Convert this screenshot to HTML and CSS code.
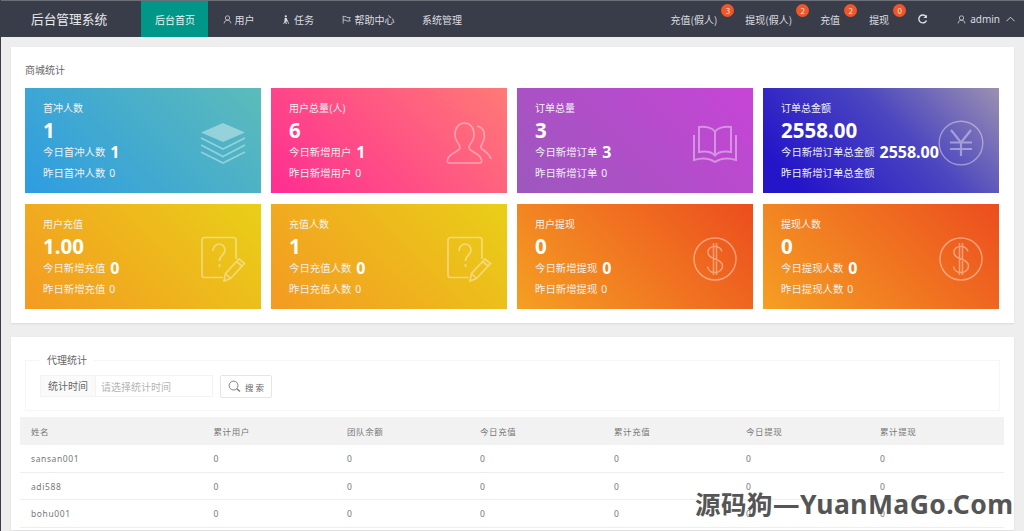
FILE: index.html
```html
<!DOCTYPE html>
<html lang="zh-CN">
<head>
<meta charset="utf-8">
<title>后台管理系统</title>
<link rel="stylesheet" href="styles.css">
</head>
<body>
<svg class="defs" width="0" height="0" aria-hidden="true">
  <symbol id="i-user" viewBox="0 0 12 12"><circle cx="6" cy="4" r="2.9" fill="none" stroke="currentColor"/><path d="M1.500 11.200c.3-2.700 2-4.300 4.500-4.300s4.200 1.600 4.500 4.300" fill="none" stroke="currentColor"/></symbol>
  <symbol id="i-q" viewBox="0 0 46 46"><path d="M36 23V4a2.500 2.500 0 0 0-2.500-2.500H4.500A2.500 2.500 0 0 0 2 4v35a2.500 2.500 0 0 0 2.500 2.500H23" fill="none" stroke="currentColor" stroke-width="1.700"/><path d="M13 15c0-4 3-7 6-7s6 2.500 6 6c0 5-5.500 5.500-5.500 11M19.500 28v3" fill="none" stroke="currentColor" stroke-width="1.700"/><path d="M24 45l1.500-7.500L39 23l5.500 4.500L30.500 42.500zM36.500 25.500l5.500 4.500M25.500 37.500l5 5" fill="none" stroke="currentColor" stroke-width="1.700"/></symbol>
  <symbol id="i-dollar" viewBox="0 0 46 46"><circle cx="23" cy="23" r="21" fill="none" stroke="currentColor" stroke-width="1.500"/><path d="M30 15.500c-1-3-3.500-5-7-5-4.500 0-7 2.500-7 6s2.500 5 7 6.500 7.500 3 7.500 7-3.500 6.500-7.500 6.500c-4 0-7-2.500-7.500-6M21.500 7v32M24.500 7v32" fill="none" stroke="currentColor" stroke-width="1.500"/></symbol>
</svg>

<header class="topbar">
  <div class="logo">后台管理系统</div>
  <nav class="nav-left">
    <a class="nav-item active">后台首页</a>
    <a class="nav-item"><svg class="nav-ico"><use href="#i-user"/></svg>用户</a>
    <a class="nav-item"><svg class="nav-ico" viewBox="0 0 12 12"><circle cx="5" cy="1.800" r="1.500" fill="currentColor"/><path d="M3.600 4h2.600l1.200 3 2.100 4.800-.7.300-2.300-4.400-.7 1.400.6 3H5L4.300 9l-1.700 3H1.700l1.600-4z" fill="currentColor"/></svg>任务</a>
    <a class="nav-item"><svg class="nav-ico nav-ico-wide" viewBox="0 0 12 12"><path d="M1.500 1v10.500M1.500 2.200h4.200l.8 1.200H11l-1.500 2.300L11 8H6l-.8-1.200H1.500" fill="none" stroke="currentColor"/></svg>帮助中心</a>
    <a class="nav-item">系统管理</a>
  </nav>
  <div class="nav-right">
    <a class="tip tip-long">充值(假人)<span class="badge">3</span></a>
    <a class="tip tip-long">提现(假人)<span class="badge">2</span></a>
    <a class="tip">充值<span class="badge">2</span></a>
    <a class="tip tip-long">提现<span class="badge">0</span></a>
    <svg class="refresh" viewBox="0 0 12 12"><path d="M10 3.200A4.300 4.300 0 1 0 10.300 7" fill="none" stroke="currentColor" stroke-width="1.500"/><path d="M10.800 0.800v3.600H7.200z" fill="currentColor"/></svg>
    <a class="admin"><svg class="nav-ico"><use href="#i-user"/></svg>admin<svg class="caret" viewBox="0 0 10 6"><path d="M.5 5.500L5 1l4.500 4.500" fill="none" stroke="currentColor"/></svg></a>
  </div>
</header>

<main class="main">
  <section class="panel panel-stats">
    <h2 class="panel-title">商城统计</h2>
    <div class="stats">
      <article class="stat g-blue">
        <h3>首冲人数</h3><p class="big">1</p>
        <p class="line">今日首冲人数<b>1</b></p><p class="line">昨日首冲人数<span>0</span></p>
        <svg class="stat-ico" viewBox="0 0 46 46"><path d="M23 3l22 9.500L23 22 1 12.500z" fill="currentColor"/><path d="M1 18l22 11 22-11M1 25l22 11.500L45 25M1 32l22 11 22-11" fill="none" stroke="currentColor" stroke-width="1.600"/></svg>
      </article>
      <article class="stat g-pink">
        <h3>用户总量(人)</h3><p class="big">6</p>
        <p class="line">今日新增用户<b>1</b></p><p class="line">昨日新增用户<span>0</span></p>
        <svg class="stat-ico" viewBox="0 0 46 46"><path d="M3 43c-2 0-2-2-1-4.500 2-5 9.500-6.500 11.500-9.500.7-1.500.5-3-.5-4.500-2-2.500-4-6-4-10C9 7.500 13 3 18.500 3S28 7.500 28 14.500c0 4-2 7.500-4 10-1 1.500-1.200 3-.5 4.500 2 3 9.500 4.500 11.500 9.500 1 2.500 1 4.500-1 4.500z" fill="none" stroke="currentColor" stroke-width="1.600"/><path d="M31 6c5 1 7.500 5 7.500 10 0 4-1.500 6.500-3 9-1 1.500-.5 3.500 1 4.500 4 2.500 7 5 8.500 9.500" fill="none" stroke="currentColor" stroke-width="1.600"/></svg>
      </article>
      <article class="stat g-purple">
        <h3>订单总量</h3><p class="big">3</p>
        <p class="line">今日新增订单<b>3</b></p><p class="line">昨日新增订单<span>0</span></p>
        <svg class="stat-ico" viewBox="0 0 46 46"><path d="M23 11.500C20 7.500 13 6 7 7v25c6.500-1 12.500-.5 16 3.500 3.500-4 9.500-4.500 16-3.500V7c-6-1-13 .5-16 4.500zM23 11.500v24" fill="none" stroke="currentColor" stroke-width="2"/><path d="M2 15v25c8-2.500 15-2 21 2 6-4 13-4.500 21-2V15" fill="none" stroke="currentColor" stroke-width="2"/></svg>
      </article>
      <article class="stat g-indigo">
        <h3>订单总金额</h3><p class="big">2558.00</p>
        <p class="line">今日新增订单总金额<b>2558.00</b></p><p class="line">昨日新增订单总金额</p>
        <svg class="stat-ico" viewBox="0 0 46 46"><circle cx="23" cy="23" r="21.800" fill="none" stroke="currentColor" stroke-width="1.400"/><path d="M13 10l10 12.500L33 10M23 22.500V36M12 22.500h22M12 29h22" fill="none" stroke="currentColor" stroke-width="2.200"/></svg>
      </article>
      <article class="stat g-yellow">
        <h3>用户充值</h3><p class="big">1.00</p>
        <p class="line">今日新增充值<b>0</b></p><p class="line">昨日新增充值<span>0</span></p>
        <svg class="stat-ico"><use href="#i-q"/></svg>
      </article>
      <article class="stat g-yellow">
        <h3>充值人数</h3><p class="big">1</p>
        <p class="line">今日充值人数<b>0</b></p><p class="line">昨日充值人数<span>0</span></p>
        <svg class="stat-ico"><use href="#i-q"/></svg>
      </article>
      <article class="stat g-orange">
        <h3>用户提现</h3><p class="big">0</p>
        <p class="line">今日新增提现<b>0</b></p><p class="line">昨日新增提现<span>0</span></p>
        <svg class="stat-ico"><use href="#i-dollar"/></svg>
      </article>
      <article class="stat g-orange">
        <h3>提现人数</h3><p class="big">0</p>
        <p class="line">今日提现人数<b>0</b></p><p class="line">昨日提现人数<span>0</span></p>
        <svg class="stat-ico"><use href="#i-dollar"/></svg>
      </article>
    </div>
  </section>

  <section class="panel panel-agents">
    <fieldset class="filter">
      <legend>代理统计</legend>
      <div class="filter-row">
        <div class="input-group">
          <label class="input-label" for="t">统计时间</label>
          <input class="input" id="t" placeholder="请选择统计时间">
        </div>
        <button class="search" type="button"><svg viewBox="0 0 14 14"><circle cx="6" cy="6" r="4.800" fill="none" stroke="currentColor"/><path d="M9.500 9.500l3.500 3" fill="none" stroke="currentColor" stroke-width="1.400"/></svg>搜 索</button>
      </div>
    </fieldset>
    <table class="table">
      <colgroup><col class="col-name"><col class="c1"><col class="c2"><col class="c3"><col class="c4"><col class="c5"><col class="c6"></colgroup>
      <thead><tr><th>姓名</th><th>累计用户</th><th>团队余额</th><th>今日充值</th><th>累计充值</th><th>今日提现</th><th>累计提现</th></tr></thead>
      <tbody>
        <tr><td>sansan001</td><td>0</td><td>0</td><td>0</td><td>0</td><td>0</td><td>0</td></tr>
        <tr><td>adi588</td><td>0</td><td>0</td><td>0</td><td>0</td><td>0</td><td>0</td></tr>
        <tr><td>bohu001</td><td>0</td><td>0</td><td>0</td><td>0</td><td>0</td><td>0</td></tr>
      </tbody>
    </table>
  </section>
</main>
<div class="watermark">源码狗<span class="wm-latin">—YuanMaGo.Com</span></div>
</body>
</html>
```
FILE: styles.css
```css
* { box-sizing: border-box; }
html, body { margin: 0; height: 531px; overflow: hidden; }
body {
  position: relative;
  background: #eeeeee;
  border-left: 1px solid #3a3d47;
  font-family: "Noto Sans CJK SC", "Noto Sans", sans-serif;
  color: #666;
}
.defs { position: absolute; }
p, h2, h3 { margin: 0; font-weight: 400; }

.topbar {
  display: flex;
  align-items: stretch;
  height: 37px;
  margin-left: -1px;
  background: #393d49;
  border-top: 1px solid #6c6e78;
  color: #e6e7ea;
  font-size: 10px;
}
.logo { width: 141px; padding-left: 31px; font-size: 12.700px; line-height: 36px; color: #e9eaec; }
.nav-left { display: flex; }
.nav-item { display: flex; align-items: center; padding: 0 13px 0 14.500px; white-space: nowrap; color: #dcdde0; }
.nav-item.active { width: 67px; padding: 0 14px; background: #009688; color: #e8f6f4; }
.nav-ico { width: 9px; height: 11px; margin-right: 3px; flex: none; }
.nav-ico-wide { margin-right: 4px; }
.nav-right { display: flex; align-items: center; margin-left: auto; padding-right: 9px; }
.tip { position: relative; margin-right: 29px; white-space: nowrap; color: #dcdde0; }
.tip-long { margin-right: 28px; }
.badge {
  position: absolute;
  top: -8px;
  right: -17px;
  width: 13px;
  height: 13px;
  border-radius: 50%;
  background: #f0562a;
  color: #f7e6df;
  font-size: 8px;
  line-height: 13px;
  text-align: center;
}
.refresh { width: 11px; height: 11px; margin-right: 29px; color: #e2e3e6; }
.admin { display: flex; align-items: center; font-family: "Noto Sans", sans-serif; color: #dcdde0; }
.admin .nav-ico { margin-right: 4px; }
.caret { width: 9px; height: 6px; margin-left: 6px; color: #dcdde0; }

.main { padding: 10px 10px 0; }
.panel {
  background: #fff;
  box-shadow: 0 1px 2px rgba(0,0,0,.08);
}
.panel-stats { height: 276px; padding: 14px 14px 0; }
.panel-title { height: 27px; font-size: 10px; line-height: 18px; color: #666; }
.stats {
  display: grid;
  grid-template-columns: repeat(4, 236px);
  grid-template-rows: 105px 105px;
  column-gap: 10px;
  row-gap: 11px;
}
.stat {
  position: relative;
  padding: 11px 0 0 18px;
  color: #fff;
  white-space: nowrap;
}
.stat h3 { font-size: 10px; line-height: 18px; color: #f3f3f3; }
.big { margin: 0 0 -2px; font-family: "Noto Sans", sans-serif; font-size: 20.500px; font-weight: 700; line-height: 26px; }
.line { display: flex; align-items: center; height: 21px; font-size: 10.400px; color: #f0f0f0; }
.line b { margin-left: 5px; font-family: "Noto Sans", sans-serif; font-size: 16px; font-weight: 700; color: #fff; }
.line span { margin-left: 4px; font-family: "Noto Sans", sans-serif; font-size: 10.400px; }
.stat-ico { position: absolute; top: 32px; right: 15px; width: 46px; height: 46px; color: rgba(255,255,255,.4); }
.g-blue { background: linear-gradient(45deg, #2e9ce1, #5cbcba); }
.g-pink { background: linear-gradient(45deg, #ff2d92, #ff7a76); }
.g-purple { background: linear-gradient(45deg, #9c58bd, #c744d6); }
.g-indigo { background: linear-gradient(45deg, #2415c8 12%, #4a45c0 58%, #9b90b2); }
.g-yellow { background: linear-gradient(45deg, #f49a22, #e9cf18); }
.g-orange { background: linear-gradient(45deg, #f59f23, #ec4d1e); }

.panel-agents { height: 193px; margin-top: 14px; padding: 14px 9px 0; }
.filter {
  height: 60px;
  margin: 0 5px;
  padding: 0 0 0 14px;
  border: 1px solid #f6f6f6;
}
.filter legend { margin-left: 0; padding: 0 7px; font-size: 10px; line-height: 18px; color: #666; }
.filter-row { display: flex; gap: 7px; margin-top: 6px; }
.input-group { display: flex; width: 173px; height: 22px; border: 1px solid #f3f3f3; }
.input-label { width: 54px; background: #fafafa; font-size: 10px; line-height: 20px; text-align: center; color: #666; }
.input { flex: 1; min-width: 0; padding: 0 5px; border: 0; border-left: 1px solid #f3f3f3; outline: 0; font: 10px "Noto Sans CJK SC", sans-serif; color: #666; }
.input::placeholder { color: #b5b5b5; }
.search {
  display: flex;
  align-items: center;
  justify-content: center;
  width: 52px;
  height: 23px;
  padding: 0;
  background: #fff;
  border: 1px solid #e6e6e6;
  border-radius: 2px;
  font: 8.500px "Noto Sans CJK SC", sans-serif;
  color: #666;
}
.search svg { width: 13px; height: 13px; margin-right: 4px; color: #777; }

.table { width: 984px; margin-top: 6px; border-collapse: collapse; table-layout: fixed; font-size: 8.500px; letter-spacing: .6px; color: #777; }
.col-name { width: 182.500px; }
.c1 { width: 133.500px; } .c2 { width: 133px; } .c3 { width: 134px; } .c4 { width: 132px; } .c5 { width: 134px; } .c6 { width: 135px; }
.table th { height: 28px; padding: 0 0 0 11px; background: #f2f2f2; font-weight: 400; text-align: left; }
.table td { height: 27.400px; padding: 0 0 0 11px; border-bottom: 1px solid #eee; color: #777; font-family: "Noto Sans", sans-serif; }

.watermark {
  position: absolute;
  left: 694px;
  top: 485px;
  font-size: 25.500px;
  font-weight: 700;
  line-height: 36px;
  letter-spacing: .5px;
  white-space: nowrap;
  color: #555;
}
.wm-latin { font-family: "Noto Sans", sans-serif; font-size: 26.500px; letter-spacing: .45px; }
```
